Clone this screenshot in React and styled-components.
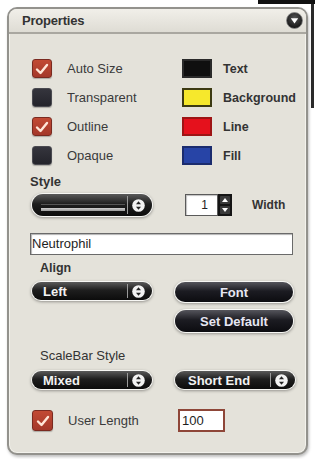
import React from 'react';
import styled, { createGlobalStyle } from 'styled-components';

const Global = createGlobalStyle`
  html, body { margin: 0; padding: 0; background: #ffffff; }
  body { font-family: "Liberation Sans", Arial, sans-serif; color: #2b2b2b; }
`;

const Page = styled.div`
  position: relative;
  width: 315px;
  height: 459px;
  box-sizing: border-box;
  padding: 7px 0 0 7px;
  overflow: hidden;
`;

const BackTop = styled.div`
  position: absolute;
  left: 258px;
  top: 0;
  width: 57px;
  height: 4px;
  background: #111;
`;

const BackEdge = styled.div`
  position: absolute;
  left: 311px;
  top: 4px;
  width: 3px;
  height: 104px;
  background: #2a2a2a;
`;

const Panel = styled.div`
  position: relative;
  width: 301px;
  height: 448px;
  box-sizing: border-box;
  border: 2px solid #93928d;
  border-radius: 10px;
  background: #e4e2da;
  box-shadow: inset 0 0 0 1px #f3f2ec, 1px 2px 3px rgba(0, 0, 0, 0.25);
  overflow: hidden;
  display: flex;
  flex-direction: column;
`;

const Header = styled.div`
  height: 23px;
  flex: none;
  display: flex;
  align-items: center;
  justify-content: space-between;
  padding: 0 3px 0 13px;
  background: linear-gradient(#f1efe9, #dedcd4);
  border-bottom: 2px solid #a9a7a0;
`;

const Title = styled.div`
  font-size: 13px;
  font-weight: bold;
  color: #333;
  letter-spacing: -0.2px;
`;

const Body = styled.div`
  padding: 20px 0 0 23px;
  display: flex;
  flex-direction: column;
`;

const OptionGrid = styled.div`
  display: grid;
  grid-template-columns: 150px 1fr;
  grid-auto-rows: 29px;
  align-items: center;
`;

const Option = styled.div`
  display: flex;
  align-items: center;
  gap: ${(p) => p.$gap || 15}px;
`;

const BoxWrap = styled.div`
  width: 20px;
  height: 19px;
  box-sizing: border-box;
  border-radius: 3px;
  flex: none;
  display: flex;
  align-items: center;
  justify-content: center;
  background: ${(p) => (p.$on ? 'linear-gradient(#c24a34, #a4382a)' : 'linear-gradient(#35353d, #24242b)')};
  border: 1px solid ${(p) => (p.$on ? '#7a2a20' : '#4a4a50')};
  box-shadow: 0 1px 1px rgba(0, 0, 0, 0.25);
`;

const LeftLabel = styled.span`
  font-size: 13px;
  color: #3a3a3a;
  white-space: nowrap;
`;

const Swatch = styled.div`
  width: 30px;
  height: 19px;
  box-sizing: border-box;
  flex: none;
  background: ${(p) => p.$fill};
  border: 2px solid ${(p) => p.$edge};
`;

const RightLabel = styled.span`
  font-size: 12.5px;
  font-weight: bold;
  color: #333;
  white-space: nowrap;
`;

const SectionLabel = styled.div`
  font-size: ${(p) => p.$size || 12.5}px;
  font-weight: ${(p) => (p.$bold ? 'bold' : 'normal')};
  color: #333;
  line-height: 14px;
  margin-top: ${(p) => p.$top}px;
  margin-left: ${(p) => p.$left || 0}px;
`;

const TwoCol = styled.div`
  display: grid;
  grid-template-columns: 120px 120px;
  column-gap: 23px;
  align-items: ${(p) => p.$align || 'center'};
  margin-top: ${(p) => p.$top}px;
`;

const Pill = styled.div`
  position: relative;
  width: 120px;
  height: ${(p) => p.$h}px;
  box-sizing: border-box;
  border-radius: ${(p) => p.$h / 2}px;
  background: linear-gradient(#5a5a5a, #1e1e1e 45%, #0c0c0c);
  box-shadow: 0 0 0 1px #f7f7f4, 0 1px 3px 1px rgba(0, 0, 0, 0.35);
  display: flex;
  align-items: center;
  color: #f2f2f2;
  font-size: 13px;
  font-weight: bold;
  padding-left: ${(p) => p.$pad || 11}px;
`;

const PillText = styled.span`
  flex: 1;
  white-space: nowrap;
`;

const LinePreview = styled.span`
  flex: 1;
  align-self: stretch;
  display: flex;
  flex-direction: column;
  justify-content: flex-end;
  padding: 0 2px 5px 0;
  &::before {
    content: '';
    display: block;
    height: 1px;
    background: #555;
    margin-bottom: 3px;
  }
  &::after {
    content: '';
    display: block;
    height: 3px;
    background: linear-gradient(#cfcfcf, #9a9a9a);
  }
`;

const Divider = styled.span`
  width: 1px;
  align-self: stretch;
  background: #9a9a9a;
  margin: 2px 4px 2px 0;
`;

const ArrowWrap = styled.span`
  display: flex;
  width: 13px;
  height: 13px;
  margin-right: 7px;
`;

const Button = styled.div`
  width: ${(p) => p.$w || 118}px;
  height: ${(p) => p.$h}px;
  box-sizing: border-box;
  border-radius: ${(p) => p.$h / 2}px;
  background: linear-gradient(#55555c, #1c1c22 45%, #0c0c10);
  box-shadow: 0 0 0 1px #f7f7f4, 0 1px 3px 1px rgba(0, 0, 0, 0.35);
  display: flex;
  align-items: center;
  justify-content: center;
  color: #e6e6f2;
  font-size: 13px;
  font-weight: bold;
`;

const ButtonStack = styled.div`
  display: flex;
  flex-direction: column;
  gap: 8px;
`;

const SpinRow = styled.div`
  display: flex;
  align-items: center;
  padding-left: 10px;
`;

const SpinBox = styled.div`
  width: 33px;
  height: 22px;
  box-sizing: border-box;
  background: #fff;
  border: 1px solid #5a5a5a;
  box-shadow: inset 1px 1px 1px rgba(0, 0, 0, 0.25);
  font-size: 12px;
  text-align: right;
  padding-right: 9px;
  line-height: 20px;
  color: #222;
`;

const Stepper = styled.div`
  width: 14px;
  height: 22px;
  flex: none;
  background: #151515;
  display: flex;
`;

const WidthLabel = styled.span`
  margin-left: 20px;
  font-size: 12px;
  font-weight: bold;
  color: #333;
`;

const TextField = styled.div`
  width: 263px;
  height: 22px;
  box-sizing: border-box;
  margin: 17px 0 0 -2px;
  background: #fff;
  border: 1px solid #6a6a6a;
  box-shadow: inset 1px 1px 1px rgba(0, 0, 0, 0.3);
  font-size: 13px;
  line-height: 20px;
  padding-left: 1px;
  color: #1e1e1e;
`;

const LengthInput = styled.div`
  width: 47px;
  height: 23px;
  box-sizing: border-box;
  margin-left: 3px;
  background: #fff;
  border: 2px solid #8e4638;
  font-size: 13px;
  line-height: 19px;
  padding-left: 2px;
  color: #1e1e1e;
`;

const CheckRowBox = styled(BoxWrap)`
  width: 21px;
  height: 21px;
`;

function Check() {
  return (
    <svg width="14" height="12" viewBox="0 0 14 12">
      <path d="M2 6.5 L5.5 10 L12 2" fill="none" stroke="#ffe6d8" strokeWidth="2.4" strokeLinecap="round" strokeLinejoin="round" />
    </svg>
  );
}

function Checkbox({ on, big }) {
  const Comp = big ? CheckRowBox : BoxWrap;
  return <Comp $on={on}>{on && <Check />}</Comp>;
}

function UpDown() {
  return (
    <svg width="13" height="13" viewBox="0 0 13 13">
      <circle cx="6.5" cy="6.5" r="6.3" fill="#f2f2f2" />
      <path d="M4 5.3 L6.5 2.3 L9 5.3 Z" fill="#222" />
      <path d="M4 7.7 L6.5 10.7 L9 7.7 Z" fill="#222" />
    </svg>
  );
}

function StepArrows() {
  return (
    <svg width="14" height="22" viewBox="0 0 14 22">
      <rect x="2" y="2" width="10" height="8" rx="1" fill="#3a3a3a" />
      <rect x="2" y="12" width="10" height="8" rx="1" fill="#3a3a3a" />
      <path d="M4 8 L7 4 L10 8 Z" fill="#fff" />
      <path d="M4 14 L7 18 L10 14 Z" fill="#fff" />
    </svg>
  );
}

function CollapseIcon() {
  return (
    <svg width="17" height="17" viewBox="0 0 17 17">
      <defs>
        <radialGradient id="cg" cx="50%" cy="35%" r="65%">
          <stop offset="0%" stopColor="#555" />
          <stop offset="100%" stopColor="#111" />
        </radialGradient>
      </defs>
      <circle cx="8.5" cy="8.5" r="8" fill="url(#cg)" stroke="#888" strokeWidth="0.8" />
      <path d="M4.8 6.3 L12.2 6.3 L8.5 11.6 Z" fill="#fff" />
    </svg>
  );
}

function Select({ label, h = 18, preview, pad }) {
  return (
    <Pill $h={h} $pad={pad}>
      {preview ? <LinePreview /> : <PillText>{label}</PillText>}
      <Divider />
      <ArrowWrap>
        <UpDown />
      </ArrowWrap>
    </Pill>
  );
}

const options = [
  { label: 'Auto Size', on: true, color: 'Text', fill: '#0f0f0f', edge: '#2a2a2a' },
  { label: 'Transparent', on: false, color: 'Background', fill: '#f6e82c', edge: '#3c3a12' },
  { label: 'Outline', on: true, color: 'Line', fill: '#e5111c', edge: '#9e1414' },
  { label: 'Opaque', on: false, color: 'Fill', fill: '#2744a6', edge: '#1b2c6e' },
];

export default function App() {
  return (
    <>
      <Global />
      <Page>
        <BackTop />
        <BackEdge />
        <Panel>
          <Header>
            <Title>Properties</Title>
            <CollapseIcon />
          </Header>
          <Body>
            <OptionGrid>
              {options.map((o) => (
                <React.Fragment key={o.label}>
                  <Option>
                    <Checkbox on={o.on} />
                    <LeftLabel>{o.label}</LeftLabel>
                  </Option>
                  <Option $gap={11}>
                    <Swatch $fill={o.fill} $edge={o.edge} />
                    <RightLabel>{o.color}</RightLabel>
                  </Option>
                </React.Fragment>
              ))}
            </OptionGrid>

            <SectionLabel $bold $top={5} $left={-2} $size={13}>Style</SectionLabel>
            <TwoCol $top={5}>
              <Select preview h={22} pad={9} />
              <SpinRow>
                <SpinBox>1</SpinBox>
                <Stepper>
                  <StepArrows />
                </Stepper>
                <WidthLabel>Width</WidthLabel>
              </SpinRow>
            </TwoCol>

            <TextField>Neutrophil</TextField>

            <SectionLabel $bold $top={6} $left={8}>Align</SectionLabel>
            <TwoCol $top={7} $align="start">
              <Select label="Left" h={18} />
              <ButtonStack>
                <Button $h={20}>Font</Button>
                <Button $h={22}>Set Default</Button>
              </ButtonStack>
            </TwoCol>

            <SectionLabel $top={17} $left={8} $size={13}>ScaleBar Style</SectionLabel>
            <TwoCol $top={8}>
              <Select label="Mixed" h={18} />
              <Select label="Short End" h={18} pad={13} />
            </TwoCol>

            <TwoCol $top={20}>
              <Option>
                <Checkbox on big />
                <LeftLabel>User Length</LeftLabel>
              </Option>
              <LengthInput>100</LengthInput>
            </TwoCol>
          </Body>
        </Panel>
      </Page>
    </>
  );
}
